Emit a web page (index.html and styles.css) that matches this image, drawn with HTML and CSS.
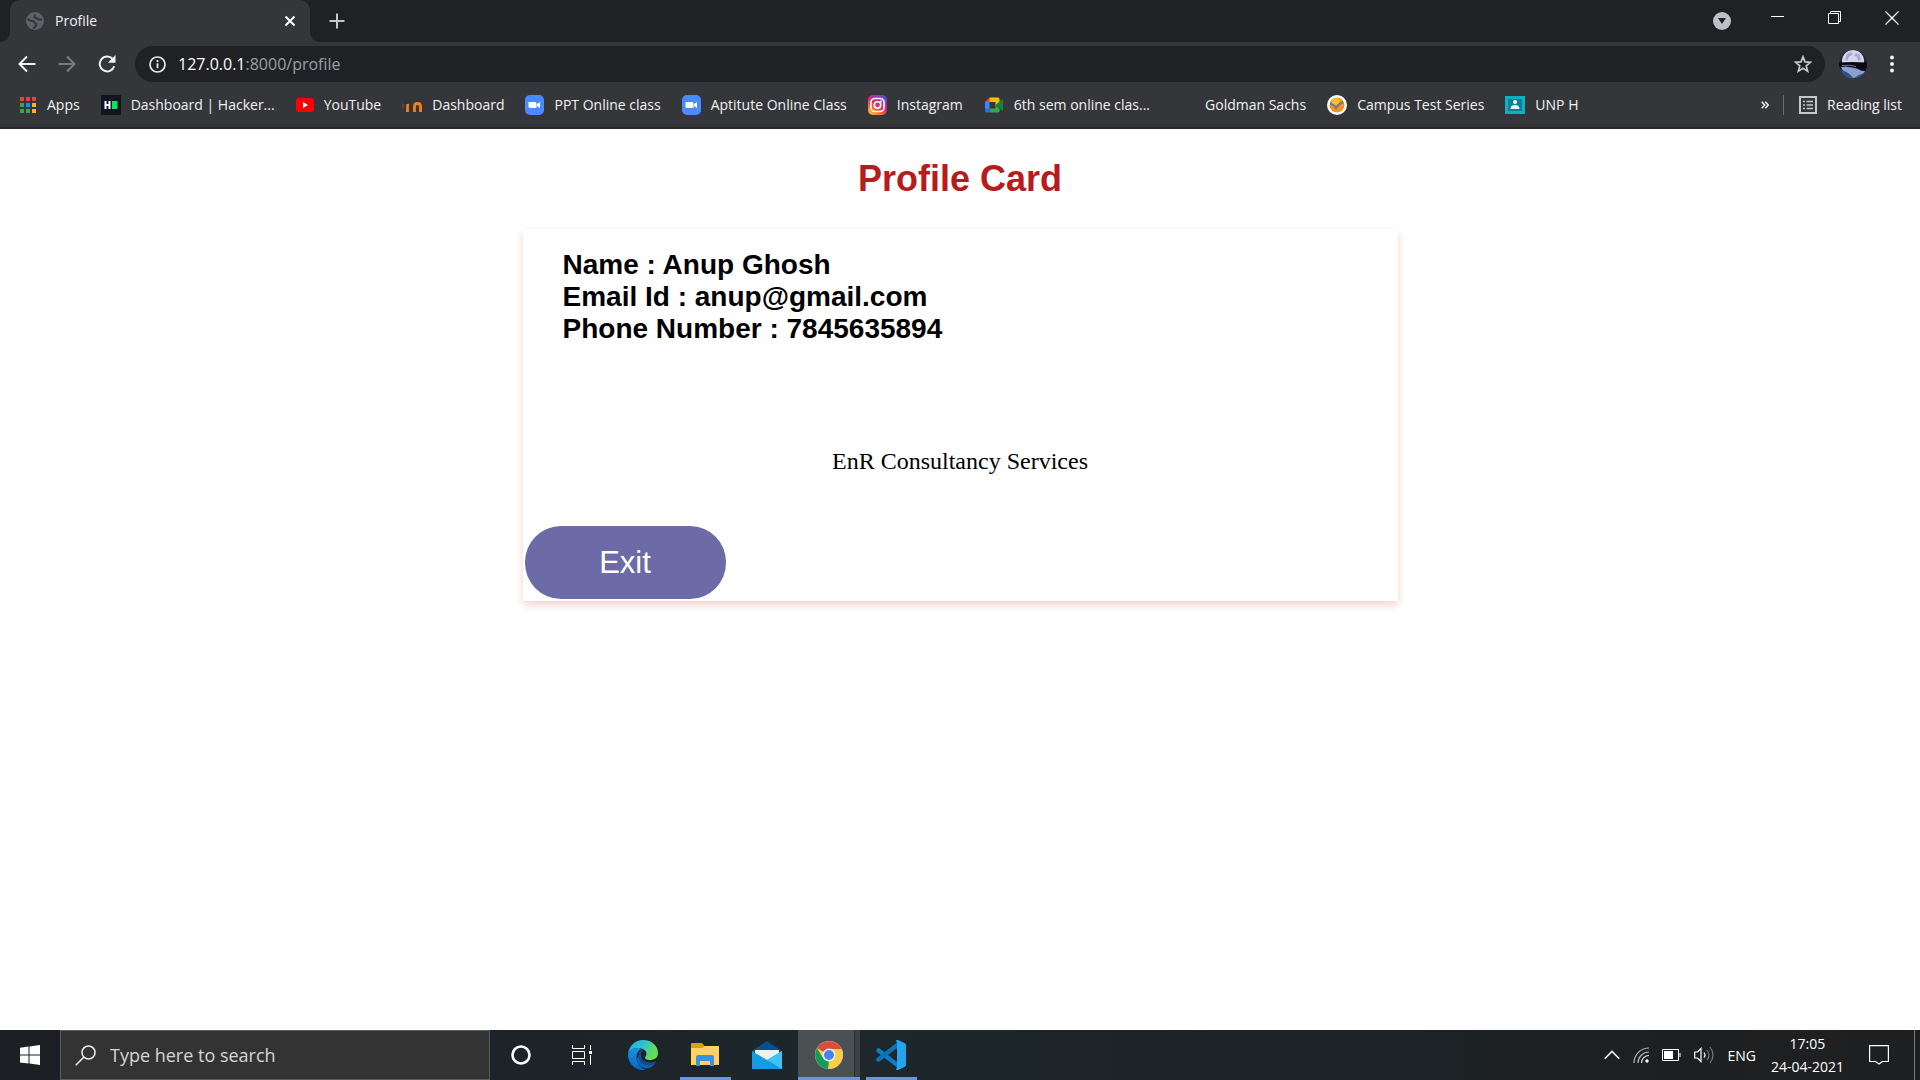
FILE: index.html
```html
<!DOCTYPE html>
<html lang="en">
<head>
<meta charset="utf-8">
<title>Profile</title>
<link rel="stylesheet" href="styles.css">
</head>
<body>
<header class="browser">
  <div class="tabstrip">
    <div class="tab">
      <svg class="tab-icon" width="18" height="18" viewBox="0 0 18 18"><circle cx="9" cy="9" r="9" fill="#5f6368"/><path d="M2 6.500q1.500 3 4 2.500 2-.3 2.500 1.500.3 1.500 2 1.500 0 2.500-3.500 4.500M9.500 2.500q-2 2.500 0 3.500t3.500 1.500 3 0" fill="none" stroke="#35363a" stroke-width="2"/></svg>
      <span class="tab-title">Profile</span>
      <button class="plain" aria-label="Close tab"><svg width="12" height="12" viewBox="0 0 12 12"><path d="M1.500 1.500l9 9M10.500 1.500l-9 9" stroke="#fff" stroke-width="2"/></svg></button>
    </div>
    <button class="plain new-tab" aria-label="New tab"><svg width="16" height="16" viewBox="0 0 16 16"><path d="M8 .5v15M.5 8h15" stroke="#c4c7cb" stroke-width="2"/></svg></button>
    <div class="window-controls">
      <button class="plain search-tabs" aria-label="Search tabs"><svg width="18" height="18" viewBox="0 0 18 18"><circle cx="9" cy="9" r="9" fill="#bdc1c6"/><path d="M5 6h8l-4 6z" fill="#202124"/></svg></button>
      <button class="plain" aria-label="Minimize"><svg width="14" height="14" viewBox="0 0 14 14"><path d="M0 5.500h13" stroke="#fff"/></svg></button>
      <button class="plain" aria-label="Restore"><svg width="14" height="14" viewBox="0 0 14 14"><path d="M.5 2.500h10v10H.500zM2.500 2.500v-2h10v10h-2" fill="none" stroke="#fff"/></svg></button>
      <button class="plain" aria-label="Close"><svg width="14" height="14" viewBox="0 0 14 14"><path d="M.5.500l13 13M13.500.500l-13 13" stroke="#fff" stroke-width="1.200"/></svg></button>
    </div>
  </div>
  <div class="toolbar">
    <button class="plain nav" aria-label="Back"><svg width="18" height="18" viewBox="0 0 18 18"><path d="M17.500 9H2M9 1.500L1.500 9 9 16.500" fill="none" stroke="#f1f3f4" stroke-width="2"/></svg></button>
    <button class="plain nav" aria-label="Forward"><svg width="18" height="18" viewBox="0 0 18 18"><path d="M.5 9H16M9 1.500L16.500 9 9 16.500" fill="none" stroke="#7b7c80" stroke-width="2"/></svg></button>
    <button class="plain nav" aria-label="Reload"><svg width="18" height="18" viewBox="0 0 18 18"><path d="M14.800 4.200A7.400 7.400 0 1 0 16.200 11.200" fill="none" stroke="#f1f3f4" stroke-width="2"/><path d="M17.500 0v7.700H9.800z" fill="#f1f3f4"/></svg></button>
    <div class="omnibox">
      <svg width="17" height="17" viewBox="0 0 17 17"><circle cx="8.500" cy="8.500" r="7.500" fill="none" stroke="#e8eaed" stroke-width="1.700"/><path d="M8.500 7.300v5M8.500 4v2" stroke="#e8eaed" stroke-width="1.800"/></svg>
      <span class="url">127.0.0.1<span class="url-path">:8000/profile</span></span>
      <button class="plain" aria-label="Bookmark"><svg width="18" height="18" viewBox="0 0 18 18"><path d="M9 1.800l2 5.100 5.400.400-4.200 3.500 1.400 5.300L9 13.200l-4.600 2.900 1.400-5.300L1.600 7.300 7 6.900z" fill="none" stroke="#c4c7cb" stroke-width="1.700"/></svg></button>
    </div>
    <button class="plain avatar" aria-label="Account"><svg width="28" height="28" viewBox="0 0 28 28"><defs><clipPath id="av"><circle cx="14" cy="14" r="14"/></clipPath></defs><g clip-path="url(#av)"><path fill="#20263b" d="M0 0h28v28H0z"/><circle cx="14" cy="11" r="11" fill="#d6d6ee"/><path d="M8 4l4-2 2 2-4 3-2 4-2-1zM17 3l4 2 1 5-3 1-1-4-3-1z" fill="#a9aad0"/><path d="M2 17h24v6l-6 5H8z" fill="#8d9dcd"/><path d="M0 20q8 0 14 8H0zM20 25l8-3v6H15z" fill="#26528d"/><path d="M0 12.500q13-1 28 0v9l-6-1q-6-4-22-4z" fill="#080a14"/><path d="M3 15.500q8-1 14 1" stroke="#6b77a0" fill="none"/></g></svg></button>
    <button class="plain menu" aria-label="Menu"><svg width="4" height="18" viewBox="0 0 4 18"><g fill="#f1f3f4"><circle cx="2" cy="2.500" r="2"/><circle cx="2" cy="9" r="2"/><circle cx="2" cy="15.500" r="2"/></g></svg></button>
  </div>
  <nav class="bookmarks" aria-label="Bookmarks">
    <a href="#" class="bookmark"><svg width="18" height="18" viewBox="0 0 18 18"><path fill="#ea4335" d="M1 1h4v4H1zM7 1h4v4H7zM13 1h4v4h-4z"/><path fill="#34a853" d="M1 7h4v4H1zM1 13h4v4H1zM7 13h4v4H7z"/><path fill="#1e88f5" d="M7 7h4v4H7z"/><path fill="#fbb31a" d="M13 7h4v4h-4zM13 13h4v4h-4z"/></svg>Apps</a>
    <a href="#" class="bookmark"><svg width="20" height="20" viewBox="0 0 20 20"><path fill="#0e1621" d="M0 0h20v20H0z"/><path d="M4.500 6v8M8.500 6v8M4.500 10h4" stroke="#fff" stroke-width="2"/><path fill="#10e05b" d="M11 6h5.500v8H11z"/></svg>Dashboard | Hacker...</a>
    <a href="#" class="bookmark"><svg width="18" height="20" viewBox="0 0 18 20"><rect y="3" width="18" height="14" rx="3" fill="#f00"/><path d="M7 7l5 3-5 3z" fill="#fff"/></svg>YouTube</a>
    <a href="#" class="bookmark"><svg width="20" height="20" viewBox="0 0 20 20"><path d="M5.500 17v-5.500q0-2.500 1.500-2.500M12.500 17v-5.500q0-3 3-3t3 3V17" fill="none" stroke="#f28023" stroke-width="2.800"/><path d="M0 8l6-4 5 2-5 3z" fill="#333235"/><path d="M1 8.500v5" stroke="#65544b"/></svg>Dashboard</a>
    <a href="#" class="bookmark"><svg width="19" height="20" viewBox="0 0 19 20"><rect width="19" height="20" rx="5" fill="#4a8cff"/><path d="M4 7h6q1.500 0 1.500 1.500V13H5q-1.500 0-1.500-1.500V7zM12 9l3-2v6l-3-2z" fill="#fff"/></svg>PPT Online class</a>
    <a href="#" class="bookmark"><svg width="19" height="20" viewBox="0 0 19 20"><rect width="19" height="20" rx="5" fill="#4a8cff"/><path d="M4 7h6q1.500 0 1.500 1.500V13H5q-1.500 0-1.500-1.500V7zM12 9l3-2v6l-3-2z" fill="#fff"/></svg>Aptitute Online Class</a>
    <a href="#" class="bookmark"><svg width="19" height="20" viewBox="0 0 19 20"><defs><linearGradient id="ig" x1="0" y1="1" x2=".7" y2="0"><stop stop-color="#fed75a"/><stop offset=".3" stop-color="#fa7e1e"/><stop offset=".6" stop-color="#d62976"/><stop offset="1" stop-color="#6548d2"/></linearGradient></defs><rect width="19" height="20" rx="5" fill="url(#ig)"/><g fill="none" stroke="#fff" stroke-width="1.600"><rect x="3" y="3.500" width="13" height="13" rx="4"/><circle cx="9.500" cy="10" r="3.200"/></g><circle cx="13" cy="6.500" r="1" fill="#fff"/></svg>Instagram</a>
    <a href="#" class="bookmark"><svg width="20" height="20" viewBox="0 0 20 20"><path fill="#4285f4" d="M1 7h4.500v7H1z"/><path fill="#ea4335" d="M1 7l4.500-4.500V7z"/><path fill="#fbbc04" d="M5.500 2.500h8.500q1.500 0 1.500 1.500v3.500L11.500 11V7h-6z"/><path fill="#34a853" d="M5.500 13.500h6V10l4 3.500V16q0 1.500-1.500 1.500H5.500z"/><path fill="#188038" d="M11.500 10L18 4.500q1-.5 1 .5v10q0 1-1 .5z"/><path fill="#2871dd" d="M1 13.500h4.500v4h-3Q1 17.500 1 16z"/></svg>6th sem online clas...</a>
    <a href="#" class="bookmark"><span class="blank-icon"></span>Goldman Sachs</a>
    <a href="#" class="bookmark"><svg width="20" height="20" viewBox="0 0 20 20"><circle cx="10" cy="10" r="10" fill="#fff"/><circle cx="10" cy="10" r="7.500" fill="#f6921e"/><circle cx="9" cy="7" r="4" fill="#ffc02e"/><path d="M3 9q4 0 6 4 2-4 7-6" fill="none" stroke="#6b7c91" stroke-width="2"/></svg>Campus Test Series</a>
    <a href="#" class="bookmark"><svg width="20" height="20" viewBox="0 0 20 20"><path fill="#0db1c4" d="M0 1h20v18H0z"/><path fill="#078296" d="M3 4h14v12H3z"/><circle cx="10" cy="7" r="2" fill="#fff"/><path d="M5.500 14q0-4 4.500-4t4.500 4z" fill="#e1f5f7"/></svg>UNP H</a>
    <button class="plain more" aria-label="More bookmarks"><svg width="8" height="8" viewBox="0 0 8 8"><path d="M.7.700L3.700 4l-3 3.300M4.300.700L7.300 4l-3 3.300" fill="none" stroke="#f1f3f4" stroke-width="1.500"/></svg></button>
    <button class="plain bookmark reading"><svg width="18" height="18" viewBox="0 0 18 18"><path d="M1 1h16v16H1z" fill="none" stroke="#c4c7cb" stroke-width="2"/><path d="M4 5.500h2M7.500 5.500H14M4 9h2M7.500 9H14M4 12.500h2M7.500 12.500H14" stroke="#c4c7cb" stroke-width="1.600"/></svg>Reading list</button>
  </nav>
</header>

<main class="page">
  <h1 class="page-title">Profile Card</h1>
  <section class="card">
    <h2 class="details">Name : Anup Ghosh<br>Email Id : anup@gmail.com<br>Phone Number : 7845635894</h2>
    <p class="company">EnR Consultancy Services</p>
    <button class="exit">Exit</button>
  </section>
</main>

<footer class="taskbar">
  <button class="plain start" aria-label="Start"><svg width="20" height="20" viewBox="0 0 20 20"><path fill="#fff" d="M0 2.700L8.500 1.500v8H0zM9.500 1.400L20 0v9.500H9.500zM0 10.500h8.500v8L0 17.400zM9.500 10.500H20V20L9.500 18.600z"/></svg></button>
  <label class="search"><svg width="21" height="21" viewBox="0 0 21 21"><circle cx="13.500" cy="7.500" r="6.500" fill="none" stroke="#f0f0f0" stroke-width="1.500"/><path d="M9 12L.7 20.300" stroke="#f0f0f0" stroke-width="1.500"/></svg><input class="search-input" type="text" placeholder="Type here to search" aria-label="Search"></label>
  <div class="apps">
    <button class="plain app small" aria-label="Cortana"><svg width="20" height="20" viewBox="0 0 20 20"><circle cx="10" cy="10" r="8.500" fill="none" stroke="#fff" stroke-width="2.600"/></svg></button>
    <button class="plain app small" aria-label="Task view"><svg width="20" height="20" viewBox="0 0 20 20"><path d="M.5 0v3.500h12V0M.500 20v-3.500h12V20M.5 6.500h12v7H.500zM18.500 0v5M18.500 10v10" fill="none" stroke="#fff"/><path fill="#fff" d="M17 6h3v3h-3z"/></svg></button>
    <button class="plain app" aria-label="Microsoft Edge"><svg width="30" height="30" viewBox="0 0 30 30"><defs><linearGradient id="e1" x1="0" y1="0" x2="1" y2=".4"><stop stop-color="#2ba7e4"/><stop offset=".5" stop-color="#2bc3d2"/><stop offset="1" stop-color="#6be04c"/></linearGradient><linearGradient id="e2" x1="0" y1="0" x2="0" y2="1"><stop stop-color="#1794df"/><stop offset="1" stop-color="#0863c7"/></linearGradient></defs><path d="M0 14C1 6 7 0 15 0c9 0 15 6 15 13 0 5-4 7-8 7-4 0-5-1.500-5-2.300 0-1 1.500-1.700 1.500-4C18.500 10 14 8 9.500 8 4 8 1 11 0 14z" fill="url(#e1)"/><path d="M0 15C0 11 4 8 9.500 8c2 0 3 .3 4 .7C10.500 10 8.500 13 8.500 17c0 6 4 11 9 12.700A15 15 0 0 1 0 15z" fill="url(#e2)"/><path d="M13.500 9.500C11 11 10 14 10 17c0 6 5 10 8 10 5 0 8-3 10-5 .5-.7-.2-.7-.6-.5-6 2.500-14 0-14.500-6-.1-2 .6-4 2-5.200z" fill="#124b91"/><path d="M8.500 17c0 6 4 10 9 11.500 5 0 8-3 10-6C23 27 13 27 10.500 18z" fill="#0f65b6"/></svg></button>
    <button class="plain app open" aria-label="File Explorer"><svg width="28" height="24" viewBox="0 0 28 24"><path fill="#dda000" d="M0 1q0-1 1-1h10l2.500 3H28v5H0z"/><path fill="#ffd261" d="M0 5h11l3-2h13q1 0 1 1v18H0z"/><path d="M5 23V14q0-2 2-2h14q2 0 2 2v9h-4v-5H9v5z" fill="#3794dd"/></svg></button>
    <button class="plain app" aria-label="Mail"><svg width="30" height="28" viewBox="0 0 30 28"><path fill="#064f94" d="M0 10L15 0l15 10v4H0z"/><path fill="#f0f0ef" d="M3 9h24v5l-12 7L3 14z"/><path fill="#149be2" d="M0 10l15 9 15-9v18H0z"/><path fill="#3dc4f4" d="M30 10v18L15 19z"/></svg></button>
    <button class="plain app open active" aria-label="Google Chrome"><svg width="28" height="28" viewBox="0 0 28 28"><circle cx="14" cy="14" r="14" fill="#fbce4a"/><path fill="#db4b3f" d="M14 14L2 7A14 14 0 0 1 26.500 8H14z"/><path fill="#109e5a" d="M2 7l6.500 11L14 20l-1 8A14 14 0 0 1 2 7z"/><path fill="#fbce4a" d="M14 8h12.500A14 14 0 0 1 13 28l7-11z"/><circle cx="14" cy="14" r="6.500" fill="#f1f1f1"/><circle cx="14" cy="14" r="5" fill="#4384f3"/></svg></button>
    <button class="plain app open" aria-label="Visual Studio Code"><svg width="30" height="30" viewBox="0 0 30 30"><path d="M2.500 10.500L22 25.500" stroke="#0a7dc6" stroke-width="4.500" stroke-linecap="round"/><path d="M2.500 19.500L22 4.500" stroke="#0b72b5" stroke-width="4.500" stroke-linecap="round"/><path fill="#27a4ee" d="M20 0h2l6.500 3q1.500.8 1.500 2.500v19q0 1.700-1.500 2.500L22 30h-2l1-3V3z"/></svg></button>
  </div>
  <div class="tray">
    <svg width="16" height="10" viewBox="0 0 16 10"><path d="M.7 8.700L8 1.400l7.300 7.300" fill="none" stroke="#f0f0f0" stroke-width="1.500"/></svg>
    <svg width="16" height="16" viewBox="0 0 16 16"><g fill="none" stroke="#b5b5b5" stroke-width="1.200"><path d="M1 16A15 15 0 0 1 16 1"/><path d="M5 16A11 11 0 0 1 16 5"/></g><path d="M8.500 16A7.500 7.500 0 0 1 16 8.500" fill="none" stroke="#e5e5e5" stroke-width="1.200"/><circle cx="14" cy="14" r="1.700" fill="#fff"/></svg>
    <svg width="19" height="12" viewBox="0 0 19 12"><path d="M.5.500h16v11H.5zM18 4v4" fill="none" stroke="#fff"/><path fill="#fff" d="M2 2h9v8H2z"/></svg>
    <svg width="20" height="18" viewBox="0 0 20 18"><path d="M.7 6h2.800L7 2.500v13L3.500 12H.7z" fill="none" stroke="#fff" stroke-width="1.200"/><path d="M10 6.500q2 2.500 0 5" fill="none" stroke="#fff" stroke-width="1.200"/><path d="M13 4q4 5 0 10M16 1q6 8 0 16" fill="none" stroke="#777" stroke-width="1.200"/></svg>
    <span class="language">ENG</span>
    <div class="clock"><span>17:05</span><span>24-04-2021</span></div>
    <button class="plain notices" aria-label="Notifications"><svg width="20" height="20" viewBox="0 0 20 20"><path d="M.6.600h18.800v15.900h-6L10 19l-3.400-2.500h-6z" fill="none" stroke="#fff" stroke-width="1.200"/></svg></button>
    <span class="show-desktop"></span>
  </div>
</footer>
</body>
</html>
```
FILE: styles.css
```css
* {
  box-sizing: border-box;
}

body {
  margin: 0;
  min-height: 100vh;
  display: flex;
  flex-direction: column;
  background: #fff;
  font-family: "Segoe UI", "Open Sans", sans-serif;
  font-size: 14px;
}

svg {
  display: block;
  flex: none;
}

.plain {
  display: flex;
  align-items: center;
  justify-content: center;
  border: 0;
  padding: 0;
  background: none;
  color: inherit;
  font: inherit;
}

/* Browser frame */
.browser {
  background: #35363a;
  color: #f1f3f4;
  border-bottom: 2px solid #26272a;
}

.tabstrip {
  display: flex;
  align-items: center;
  height: 42px;
  padding-left: 10px;
  background: #202124;
}

.tab {
  position: relative;
  display: flex;
  align-items: center;
  gap: 11px;
  width: 300px;
  height: 42px;
  padding: 0 14px 1px 16px;
  border-radius: 10px 10px 0 0;
  background: #35363a;
}

.tab::before,
.tab::after {
  content: "";
  position: absolute;
  bottom: 0;
  width: 10px;
  height: 10px;
}

.tab::before {
  left: -10px;
  background: radial-gradient(circle at 0 0, #202124 10px, #35363a 10px);
}

.tab::after {
  right: -10px;
  background: radial-gradient(circle at 100% 0, #202124 10px, #35363a 10px);
}

.tab-title {
  flex: 1;
}

.new-tab {
  margin-left: 19px;
}

.window-controls {
  display: flex;
  align-items: flex-start;
  height: 100%;
  margin-left: auto;
}

.window-controls .plain {
  width: 57px;
  height: 36px;
}

.window-controls .search-tabs {
  width: 54px;
  height: 42px;
}

.toolbar {
  display: flex;
  align-items: center;
  height: 46px;
  padding: 0 26px 2px 7px;
}

.nav {
  width: 40px;
  height: 36px;
}

.omnibox {
  flex: 1;
  display: flex;
  align-items: center;
  gap: 12px;
  height: 36px;
  margin-left: 8px;
  padding: 0 13px 0 14px;
  border-radius: 18px;
  background: #202124;
}

.url {
  flex: 1;
  font-size: 16px;
  color: #fff;
}

.url-path {
  color: #9aa0a6;
}

.avatar {
  margin-left: 14px;
}

.menu {
  margin-left: 23px;
}

.bookmarks {
  display: flex;
  align-items: center;
  gap: 21px;
  height: 39px;
  padding: 0 18px 6px 19px;
}

.bookmark {
  display: flex;
  align-items: center;
  gap: 10px;
  color: #f1f3f4;
  text-decoration: none;
  white-space: nowrap;
}

.blank-icon {
  width: 24px;
  height: 20px;
}

.more {
  margin-left: auto;
  margin-right: -7px;
}

.reading {
  height: 20px;
  padding-left: 15px;
  border-left: 1px solid #6b6c70;
}

/* Page content */
.page {
  flex: 1;
  padding: 29px 20px;
  font-family: Arial, "Liberation Sans", sans-serif;
}

.page-title {
  margin: 0 0 30px;
  color: #b71c1c;
  font-size: 36px;
  line-height: 41px;
  text-align: center;
}

.card {
  max-width: 875px;
  margin: 0 auto;
  padding: 20px 2px 2px;
  box-shadow: 0 4px 8px 0 rgba(183, 28, 28, 0.2);
}

.details {
  margin: 0 38px;
  font-size: 28px;
  line-height: 32px;
}

.company {
  margin: 100px 0 49px;
  font-family: Georgia, "Liberation Serif", serif;
  font-size: 24px;
  line-height: 32px;
  text-align: center;
}

.exit {
  display: block;
  min-width: 201px;
  padding: 18px 40px;
  border: 0;
  border-radius: 36px;
  background: #6c6ba7;
  color: #fff;
  font-family: inherit;
  font-size: 31px;
  line-height: 37px;
}

/* Windows taskbar */
.taskbar {
  display: flex;
  align-items: stretch;
  height: 50px;
  background: linear-gradient(90deg, #1c1f23, #1d272c 45%, #1c2226 70%, #1e1f20);
  color: #fff;
}

.start {
  width: 60px;
}

.search {
  display: flex;
  align-items: center;
  gap: 14px;
  width: 430px;
  padding: 0 14px;
  border: 1px solid #5b5b5b;
  background: #333;
}

.search-input {
  flex: 1;
  min-width: 0;
  padding: 0;
  border: 0;
  outline: 0;
  background: none;
  color: #fff;
  font: 18px "Segoe UI", "Open Sans", sans-serif;
}

.search-input::placeholder {
  color: #d6d6d6;
  opacity: 1;
}

.apps {
  display: flex;
}

.app {
  position: relative;
  width: 62px;
}

.app.small {
  width: 61px;
}

.open::after {
  content: "";
  position: absolute;
  left: 6px;
  right: 5px;
  bottom: 0;
  height: 3px;
  background: #6b91e8;
}

.active {
  background: linear-gradient(90deg, #4a5054 56px, #293034 56px, #293034 57px, #3b4246 57px);
}

.active::after {
  left: 0;
  right: 0;
}

.tray {
  display: flex;
  align-items: center;
  gap: 13px;
  margin-left: auto;
}

.language {
  margin-right: 2px;
}

.clock {
  display: flex;
  flex-direction: column;
  align-items: center;
  line-height: 23px;
}

.notices {
  margin: 0 12px;
}

.show-desktop {
  align-self: stretch;
  width: 6px;
  border-left: 1px solid #777;
}
```
